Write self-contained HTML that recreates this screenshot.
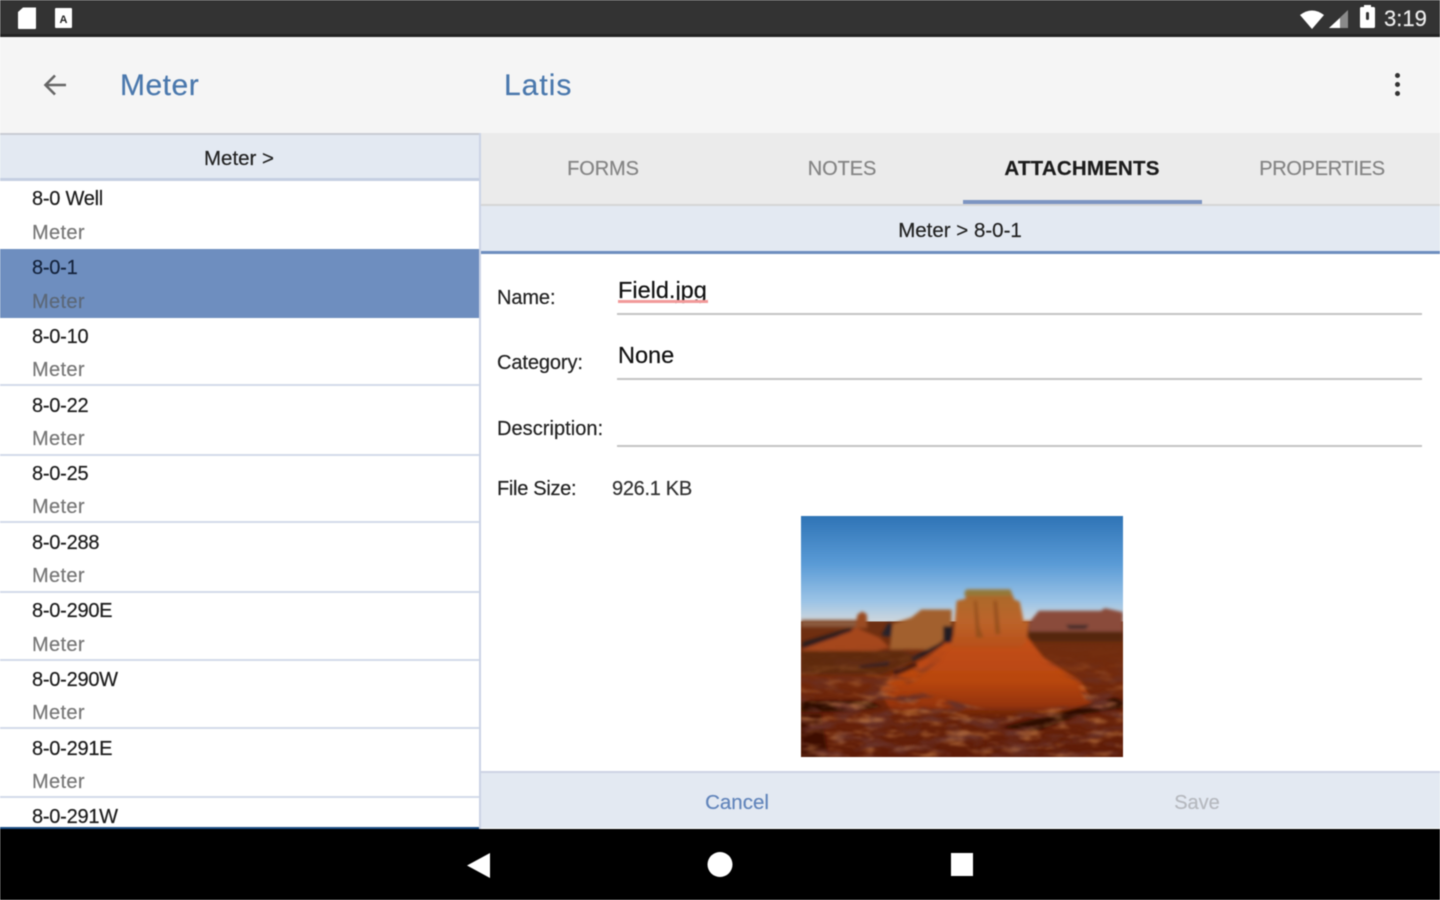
<!DOCTYPE html>
<html><head><meta charset="utf-8"><title>Latis</title>
<style>
html,body{margin:0;padding:0;width:1440px;height:900px;overflow:hidden;background:#fff}
body{font-family:"Liberation Sans",sans-serif;position:relative}
#s{position:absolute;inset:0;filter:blur(.5px)}
.a{position:absolute;white-space:nowrap;line-height:1;-webkit-text-stroke:.2px currentColor}
.b{position:absolute}
.t{left:32px;font-size:20px;color:#1c1c1c;letter-spacing:-.25px;transform:translateY(-50%)}
.m{left:32px;font-size:20px;color:#777;transform:translateY(-50%);letter-spacing:.35px}
.l{left:497px;font-size:20px;color:#222;transform:translateY(-50%);letter-spacing:-.1px}
.tab{font-size:20px;font-weight:400;color:#858585;transform:translate(-50%,-50%)}
.sep{left:0;width:480px;height:2px;background:#d3dbea}
</style></head><body>
<div id="s">
<!-- status bar -->
<div class="b" style="left:0;top:0;width:1440px;height:36px;background:#333"></div>
<svg class="b" style="left:0;top:0" width="1440" height="36">
<path d="M18 12l5-4.500h13v20.500a1 1 0 0 1-1 1H19a1 1 0 0 1-1-1z" fill="#fff"/>
<rect x="55" y="8" width="17" height="20" rx="1" fill="#fff"/>
<text x="63.500" y="23" font-size="11" font-weight="700" text-anchor="middle" fill="#222" font-family="Liberation Sans">A</text>
<path d="M1300 15q12-9 24 0l-12 14z" fill="#fff"/>
<path d="M1329 28l19-18v18z" fill="#8a8a8a"/><path d="M1329 28l11-10v10z" fill="#fff"/>
<rect x="1360" y="7" width="15" height="21" rx="1.500" fill="#fff"/>
<rect x="1364" y="5" width="7" height="3" fill="#fff"/>
<rect x="1366" y="12" width="3" height="8" rx="1.500" fill="#333"/>
</svg>
<div class="a" style="left:1384px;top:8px;font-size:22px;color:#ececec">3:19</div>
<div class="b" style="left:0;top:34px;width:1440px;height:3px;background:#222"></div>
<!-- app bar -->
<div class="b" style="left:0;top:37px;width:1440px;height:96px;background:#f5f5f5"></div>
<svg class="b" style="left:40px;top:70px" width="30" height="30" viewBox="0 0 30 30"><path d="M26 15H6M15 5.500L5.500 15 15 24.500" fill="none" stroke="#666" stroke-width="2.600"/></svg>
<div class="a" style="left:120px;top:71px;font-size:30px;color:#4a78ad;letter-spacing:.5px">Meter</div>
<div class="a" style="left:504px;top:71px;font-size:30px;color:#4a78ad;letter-spacing:1px">Latis</div>
<div class="b" style="left:1394.500px;top:73px;width:5px;height:5px;border-radius:50%;background:#333"></div>
<div class="b" style="left:1394.500px;top:82px;width:5px;height:5px;border-radius:50%;background:#333"></div>
<div class="b" style="left:1394.500px;top:91px;width:5px;height:5px;border-radius:50%;background:#333"></div>
<!-- left header -->
<div class="b" style="left:0;top:133px;width:480px;height:2px;background:#c9ccd3"></div>
<div class="b" style="left:0;top:135px;width:480px;height:44px;background:#e3e9f2"></div>
<div class="b" style="left:0;top:178px;width:480px;height:3px;background:#c5cfe2"></div>
<div class="a" style="left:239px;top:159px;font-size:20.500px;color:#222;transform:translate(-50%,-50%)">Meter &gt;</div>
<!-- list -->
<div class="b" style="left:0;top:249px;width:480px;height:69px;background:#6e8ebf"></div>
<div class="b sep" style="top:384px"></div>
<div class="b sep" style="top:454px"></div>
<div class="b sep" style="top:521px"></div>
<div class="b sep" style="top:591px"></div>
<div class="b sep" style="top:659px"></div>
<div class="b sep" style="top:727px"></div>
<div class="b sep" style="top:796px"></div>
<div class="a t" style="top:199px">8-0 Well</div><div class="a m" style="top:232.500px">Meter</div>
<div class="a t" style="top:268px;color:#14233c">8-0-1</div><div class="a m" style="top:301.500px;color:#5c6878">Meter</div>
<div class="a t" style="top:337px">8-0-10</div><div class="a m" style="top:370px">Meter</div>
<div class="a t" style="top:406px">8-0-22</div><div class="a m" style="top:438.500px">Meter</div>
<div class="a t" style="top:474px">8-0-25</div><div class="a m" style="top:507px">Meter</div>
<div class="a t" style="top:543px">8-0-288</div><div class="a m" style="top:576px">Meter</div>
<div class="a t" style="top:611px">8-0-290E</div><div class="a m" style="top:644.500px">Meter</div>
<div class="a t" style="top:680px">8-0-290W</div><div class="a m" style="top:713px">Meter</div>
<div class="a t" style="top:749px">8-0-291E</div><div class="a m" style="top:781.500px">Meter</div>
<div class="a t" style="top:817px">8-0-291W</div>
<div class="b" style="left:0;top:827px;width:480px;height:2px;background:#1c4f86"></div>
<div class="b" style="left:479px;top:133px;width:2px;height:696px;background:#ccd4e6"></div>
<!-- tabs -->
<div class="b" style="left:481px;top:133px;width:959px;height:71px;background:#ebebeb"></div>
<div class="b" style="left:481px;top:204px;width:959px;height:2px;background:#d6d6d6"></div>
<div class="a tab" style="left:603px;top:169px;letter-spacing:-.1px">FORMS</div>
<div class="a tab" style="left:842px;top:169px;letter-spacing:-.1px">NOTES</div>
<div class="a tab" style="left:1082px;top:169px;color:#1c1c1c;font-weight:700;font-size:20.500px;letter-spacing:.2px">ATTACHMENTS</div>
<div class="a tab" style="left:1322px;top:169px;letter-spacing:-.3px">PROPERTIES</div>
<div class="b" style="left:963px;top:200px;width:239px;height:4px;background:#7d95c2"></div>
<!-- sub header -->
<div class="b" style="left:481px;top:206px;width:959px;height:45px;background:#e3e9f2"></div>
<div class="b" style="left:481px;top:251px;width:959px;height:3px;background:#6e8ebf"></div>
<div class="a" style="left:960px;top:231px;font-size:20.500px;color:#222;transform:translate(-50%,-50%)">Meter &gt; 8-0-1</div>
<!-- form -->
<div class="a l" style="top:298px">Name:</div>
<div class="a" style="left:618px;top:278.500px;font-size:23.500px;color:#111">Field.jpg</div>
<div class="b" style="left:618px;top:300px;width:90px;height:3px;background:#f29a9a"></div>
<div class="b" style="left:617px;top:313px;width:805px;height:2px;background:#c4c4c4"></div>
<div class="a l" style="top:363px">Category:</div>
<div class="a" style="left:618px;top:343.500px;font-size:23.500px;color:#111">None</div>
<div class="b" style="left:617px;top:378px;width:805px;height:2px;background:#c4c4c4"></div>
<div class="a l" style="top:429px;letter-spacing:.05px">Description:</div>
<div class="b" style="left:617px;top:445px;width:805px;height:2px;background:#c4c4c4"></div>
<div class="a l" style="top:489px;letter-spacing:-.3px">File Size:</div>
<div class="a l" style="left:612px;top:489px;color:#333;letter-spacing:-.3px">926.1 KB</div>
<!-- photo -->
<svg class="b" style="left:801px;top:516px" width="322" height="241" viewBox="66 46 960 722" preserveAspectRatio="none">
<defs>
<linearGradient id="sky" x1="0" y1="0" x2="0" y2="1"><stop offset="0" stop-color="#2f74b6"/><stop offset=".45" stop-color="#5a9bd6"/><stop offset=".8" stop-color="#9cc4e6"/><stop offset="1" stop-color="#d2d8dc"/></linearGradient>
<linearGradient id="gr" x1="0" y1="0" x2="0" y2="1"><stop offset="0" stop-color="#6e3012"/><stop offset=".4" stop-color="#742a0c"/><stop offset="1" stop-color="#5e1c08"/></linearGradient>
<linearGradient id="cone" x1="0" y1="0" x2="0" y2="1"><stop offset="0" stop-color="#c4501a"/><stop offset=".55" stop-color="#b8460f"/><stop offset=".85" stop-color="#96340b"/><stop offset="1" stop-color="#7a2a0c" stop-opacity="0"/></linearGradient>
<linearGradient id="face" x1="0" y1="0" x2="0" y2="1"><stop offset="0" stop-color="#a86a2c"/><stop offset=".55" stop-color="#bc642a"/><stop offset="1" stop-color="#b84e18"/></linearGradient>
<filter id="bl" x="-5%" y="-5%" width="110%" height="110%"><feGaussianBlur stdDeviation="4.500"/></filter>
<filter id="n" x="0" y="0" width="100%" height="100%"><feTurbulence type="fractalNoise" baseFrequency=".012 .04" numOctaves="3" seed="7"/><feColorMatrix values="0 0 0 0 .14  0 0 0 0 .03  0 0 0 0 .02  3.500 0 0 0 -1.550"/><feGaussianBlur stdDeviation="3"/></filter>
<filter id="n2" x="0" y="0" width="100%" height="100%"><feTurbulence type="fractalNoise" baseFrequency=".014 .045" numOctaves="3" seed="23"/><feColorMatrix values="0 0 0 0 .66  0 0 0 0 .26  0 0 0 0 .08  3 0 0 0 -1.500"/><feGaussianBlur stdDeviation="3"/></filter>
<linearGradient id="fade" x1="0" y1="0" x2="0" y2="1"><stop offset="0" stop-color="#000"/><stop offset=".3" stop-color="#888"/><stop offset=".5" stop-color="#fff"/></linearGradient>
<mask id="mk" maskUnits="userSpaceOnUse" x="66" y="430" width="960" height="338"><rect x="66" y="430" width="960" height="338" fill="url(#fade)"/><path d="M380 560l100-80 60-70h190l60 70 100 70 30 60-260 30z" fill="#000" filter="url(#bl)"/></mask>
</defs>
<rect x="66" y="46" width="960" height="320" fill="url(#sky)"/>
<rect x="66" y="362" width="960" height="406" fill="url(#gr)"/>
<g filter="url(#bl)">
<path d="M745 366l30-36h185l12-8 54 12v60H745z" fill="#8a4c3a"/>
<path d="M745 392h281v30H745z" fill="#54280f"/>
<path d="M855 372h70l-10 12h-50z" fill="#3f2a2c"/>
<path d="M66 357h170v22H66z" fill="#8b5a3c"/>
<path d="M340 368l55-18 30-24h90v70l-60 50H330z" fill="#a2602e"/>
<path d="M70 440l100-30 60-30 70 30 30 30-80 20-180 10z" fill="#a5461a"/>
<path d="M228 382l6-40 14-10 14 8 2 42z" fill="#9a4c20"/>
<path d="M70 424l145-44 3 10-148 54z" fill="#2a1a1c"/>
<path d="M305 404l20-36h12l-2 40z" fill="#28202a"/>
<path d="M66 450h300l60 20-120 50H66z" fill="#5e2a0e"/>
<path d="M520 408L440 470 340 520 300 570 340 640 800 650 940 610 900 540 790 470 740 408z" fill="url(#cone)"/>
<path d="M520 410l10-110 26-6 4-28h130l12 30 16 6 12 60 16-6-8 66-18 18-210 2z" fill="url(#face)"/>
<path d="M556 268h134l4 16H552z" fill="#927a3a"/>
<path d="M590 300l8 80 12 30h-22l-6-110zM650 300l10 100h-14l-6-100z" fill="#96501e"/>
<path d="M490 376h28l-2 48-26 6zM400 482l100-56-6-6-100 50zM240 495l90-14-4 12-90 8z" fill="#241c24"/>
<path d="M340 510l70-24 4 10-70 30z" fill="#3a1810"/>
<path d="M66 600h200l40 18-100 14H66z" fill="#2e0e06"/>
<path d="M660 680l120-30 110-30 110-30 26 10v20l-120 20-140 50z" fill="#2e0e06"/>
<path d="M66 640h60l20 128H66z" fill="#3c1006"/>
</g>
<g mask="url(#mk)">
<rect x="66" y="430" width="960" height="338" filter="url(#n)"/>
<rect x="66" y="430" width="960" height="338" filter="url(#n2)" opacity=".55"/>
</g>
</svg>
<!-- bottom action bar -->
<div class="b" style="left:481px;top:771px;width:959px;height:2px;background:#cdd3e4"></div>
<div class="b" style="left:481px;top:773px;width:959px;height:55px;background:#e3e9f2"></div>
<div class="a" style="left:737px;top:802.500px;font-size:20.500px;color:#6285bb;transform:translate(-50%,-50%)">Cancel</div>
<div class="a" style="left:1197px;top:802.500px;font-size:20px;color:#b6b9bf;transform:translate(-50%,-50%)">Save</div>
<!-- nav -->
<div class="b" style="left:0;top:829px;width:1440px;height:71px;background:#000"></div>
<svg class="b" style="left:0;top:829px" width="1440" height="71">
<path d="M490 24v25L467 36.500z" fill="#fff"/>
<circle cx="720" cy="35.500" r="12.500" fill="#fff"/>
<rect x="951" y="24" width="22" height="23" fill="#fff"/>
</svg>
</div>
</body></html>
